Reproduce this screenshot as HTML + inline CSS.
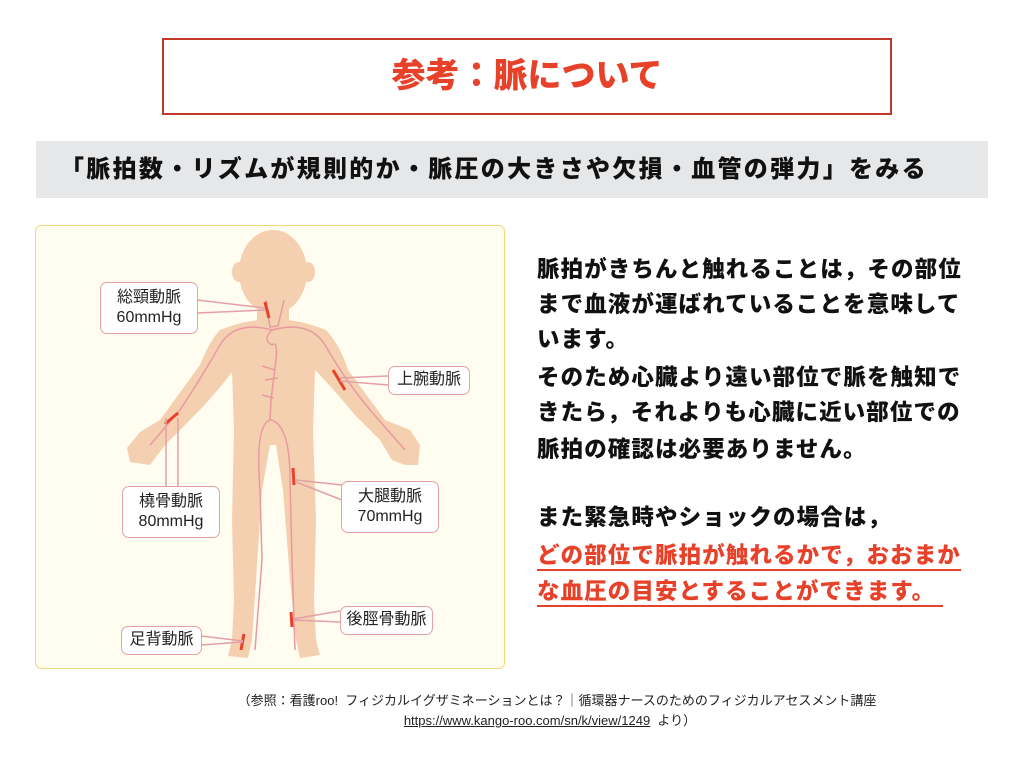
<!DOCTYPE html>
<html><head><meta charset="utf-8"><style>
*{margin:0;padding:0;box-sizing:border-box}
body{width:1024px;height:768px;background:#fff;position:relative;overflow:hidden;font-family:"Liberation Sans","Noto Sans CJK JP",sans-serif;color:#111}
.title{position:absolute;left:162px;top:38px;width:730px;height:77px;border:2px solid #c0392b;text-align:center;line-height:73px;font-size:34px;font-weight:900;color:#e8412a}
.band{position:absolute;left:36px;top:141px;width:952px;height:57px;background:#e6e7e9;font-size:24px;font-weight:900;line-height:57px;padding-left:24px;letter-spacing:2.3px;white-space:nowrap}
.panel{position:absolute;left:35px;top:225px;width:470px;height:444px;background:#fffcf0;border:1.5px solid #f6d77a;border-radius:6px}
.t{position:absolute;left:537px;font-size:22.5px;font-weight:900;letter-spacing:1.1px;white-space:nowrap;line-height:26px}
.r{color:#e8412a;border-bottom:2px solid #e8412a;line-height:26px}
.ref{position:absolute;width:1024px;text-align:center;font-size:13px;color:#222}
.lbl{position:absolute;background:#fff;border:1.5px solid #e3a0a6;border-radius:7px;font-size:16px;text-align:center;line-height:20px;color:#222}
</style></head><body>
<div class="title">参考：脈について</div>
<div class="band">「脈拍数・リズムが規則的か・脈圧の大きさや欠損・血管の弾力」をみる</div>
<div class="panel"></div>
<svg style="position:absolute;left:0;top:0" width="1024" height="768">
<g fill="#f4d0b0">
<ellipse cx="273" cy="272" rx="34" ry="42"/>
<ellipse cx="239" cy="272" rx="7" ry="10"/><ellipse cx="308" cy="272" rx="7" ry="10"/>
<rect x="257" y="300" width="32" height="30"/>
<path d="M220 330 Q250 318 273 320 Q296 318 326 330 Q340 345 348 370 L385 420 L410 430 L420 445 L418 465 L405 465 L392 460 L380 440 L355 415 Q330 385 315 370 L313 430 L316 520 L314 600 L316 640 L320 655 L300 658 L296 640 L290 580 L283 490 L276 445 L270 445 L262 490 L256 580 L252 640 L248 658 L228 656 L232 640 L234 600 L232 520 L234 430 L232 372 Q215 395 190 420 L165 445 L150 465 L130 462 L127 448 L140 432 L160 420 L200 365 Q210 340 220 330 Z"/>
</g>
<g fill="none" stroke="#e79aa0" stroke-width="1.5">
<path d="M266 300 L270 327 L278 326 L284 300"/>
<path d="M272 330 Q262 340 272 345 Q278 340 276 360 L271 400 L270 420 Q255 425 260 490 L262 560 L255 650"/>
<path d="M271 420 Q290 425 290 480 L292 560 L295 650"/>
<path d="M272 330 Q235 320 220 345 Q200 380 180 410 L150 445"/>
<path d="M272 330 Q310 320 325 345 Q345 380 370 410 L405 450"/>
<path d="M262 366 L275 370 M265 380 L278 378 M262 395 L274 398"/>
</g>
<g stroke="#e8412a" stroke-width="3" fill="none">
<path d="M265 302 L269 318"/><path d="M333 370 L345 390"/><path d="M165 424 L178 413"/><path d="M293 468 L294 485"/><path d="M291 612 L292 627"/><path d="M244 634 L241 650"/>
</g>
<g stroke="#e3a0a6" stroke-width="1.5" fill="none">
<path d="M197 300 L265 308 M197 313 L265 310"/>
<path d="M388 376 L340 378 M388 385 L340 381"/>
<path d="M166 418 L166 487 M178 418 L178 487"/>
<path d="M342 485 L296 480 M342 500 L296 482"/>
<path d="M340 611 L293 619 M340 622 L293 620"/>
<path d="M201 636 L243 641 M201 645 L243 642"/>
</g>
</svg>
<div class="lbl" style="left:100px;top:282px;width:98px;height:52px;padding-top:5px">総頸動脈<br>60mmHg</div>
<div class="lbl" style="left:388px;top:366px;width:82px;height:29px;line-height:26px">上腕動脈</div>
<div class="lbl" style="left:122px;top:486px;width:98px;height:52px;padding-top:5px">橈骨動脈<br>80mmHg</div>
<div class="lbl" style="left:341px;top:481px;width:98px;height:52px;padding-top:5px">大腿動脈<br>70mmHg</div>
<div class="lbl" style="left:340px;top:606px;width:93px;height:29px;line-height:26px">後脛骨動脈</div>
<div class="lbl" style="left:121px;top:626px;width:81px;height:29px;line-height:26px">足背動脈</div>
<div class="t" style="top:257px">脈拍がきちんと触れることは，その部位</div>
<div class="t" style="top:292px">まで血液が運ばれていることを意味して</div>
<div class="t" style="top:327px">います。</div>
<div class="t" style="top:365px">そのため心臓より遠い部位で脈を触知で</div>
<div class="t" style="top:400px">きたら，それよりも心臓に近い部位での</div>
<div class="t" style="top:437px">脈拍の確認は必要ありません。</div>
<div class="t" style="top:505px">また緊急時やショックの場合は，</div>
<div class="t r" style="top:543px">どの部位で脈拍が触れるかで，おおまか</div>
<div class="t r" style="top:579px">な血圧の目安とすることができます。&nbsp;</div>
<div class="ref" style="top:690px;left:45px">（参照：看護roo!&nbsp; フィジカルイグザミネーションとは？｜循環器ナースのためのフィジカルアセスメント講座</div>
<div class="ref" style="top:710px;left:38px"><u>https://www.kango-roo.com/sn/k/view/1249</u>&nbsp; より）</div>
</body></html>
